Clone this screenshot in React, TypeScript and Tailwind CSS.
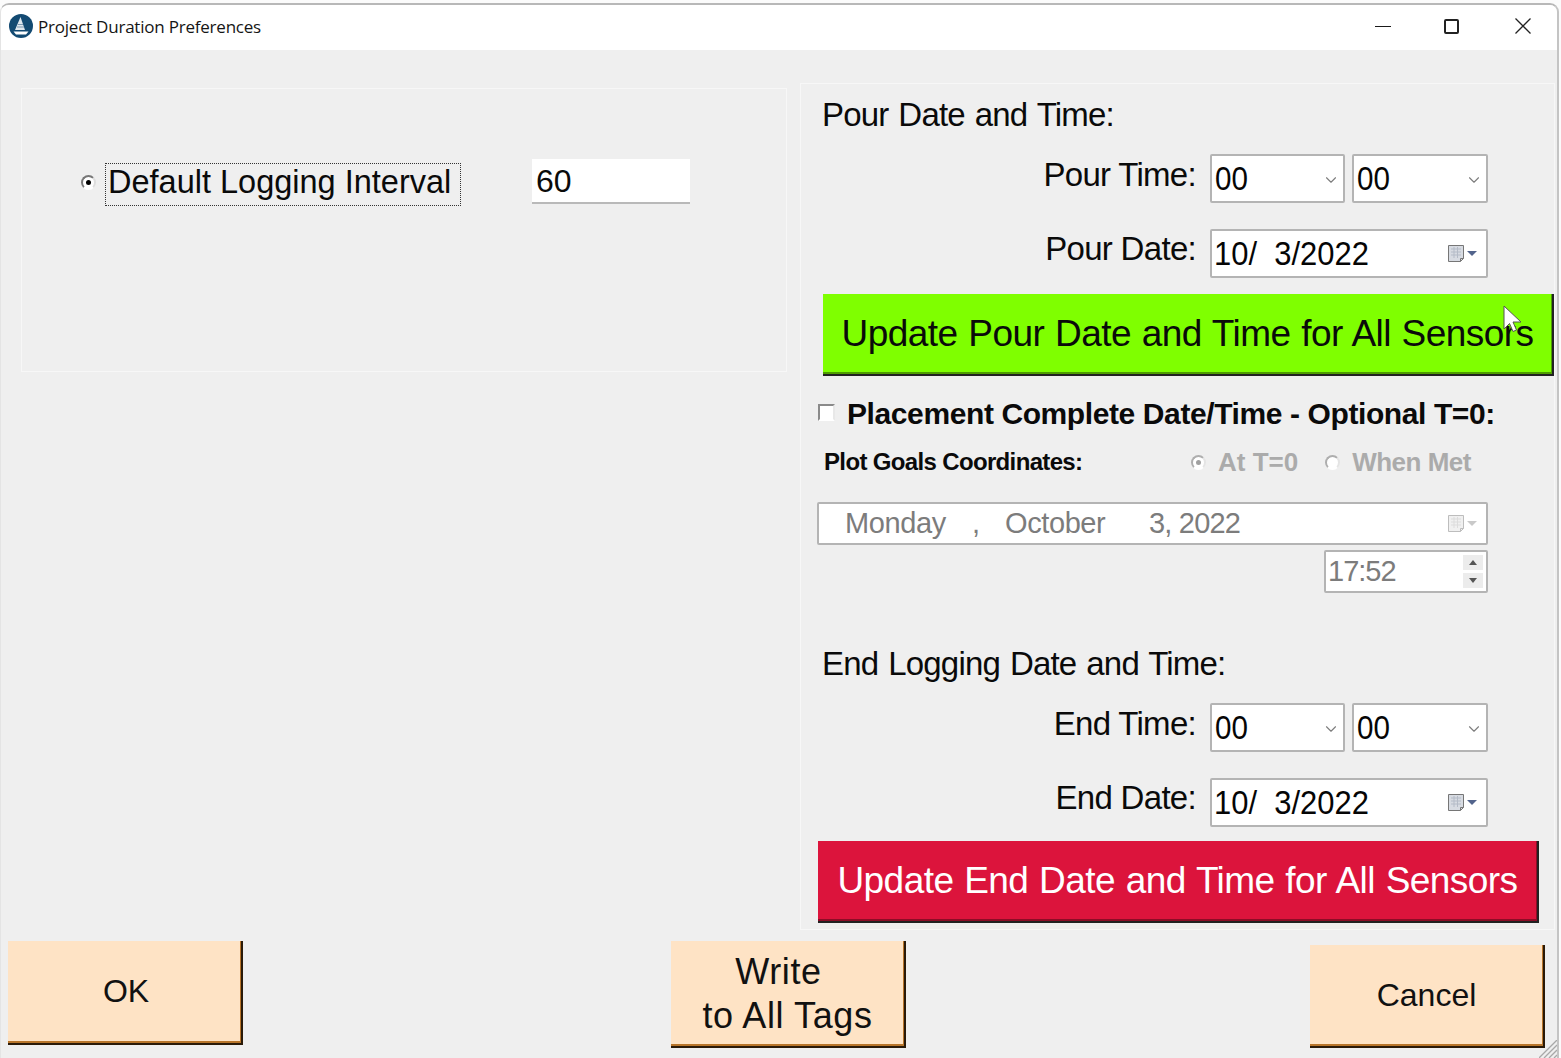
import { ChevronDown } from 'lucide-react'

const sans = "font-['Liberation_Sans',Arial,sans-serif]"

function CalendarIcon({ disabled }: { disabled?: boolean }) {
  const stroke = disabled ? '#bdbdbd' : '#767676'
  const fill = disabled ? '#f0f0f0' : '#d7dbe2'
  return (
    <svg width="32" height="20" viewBox="0 0 32 20" className="shrink-0">
      <path d="M1.5 1.5h15v13l-3 3h-12z" fill={fill} stroke={stroke} />
      <path d="M4 5h10M4 8h10M4 11h10M7 3v11M10.5 3v11" stroke={disabled ? '#dcdcdc' : '#b4bbc7'} />
      <path d="M13.5 17.5v-3h3" fill="none" stroke={stroke} />
      <path d="M20 7h10l-5 5z" fill={disabled ? '#c9c9c9' : '#52648c'} />
    </svg>
  )
}

function Combo({ wide }: { wide?: boolean }) {
  return (
    <div
      className={`flex h-[49px] items-center justify-between rounded-[2px] border-2 border-[#b4b4b4] bg-white pr-[3px] pl-[3px] text-[34px] text-[#050505] ${
        wide ? 'w-[136px]' : 'w-[135px]'
      }`}
    >
      <span className="origin-left scale-x-[0.87]">00</span>
      <ChevronDown size={18} strokeWidth={1.5} className="mt-0.5 text-[#7d7d7d]" />
    </div>
  )
}

function DateField({ value }: { value: string }) {
  return (
    <div className="flex h-[49px] w-[278px] items-center justify-between rounded-[2px] border-2 border-[#b4b4b4] bg-white pr-[7px] pl-[2px] text-[34px] text-[#050505]">
      <span className="origin-left scale-x-[0.91] whitespace-pre">{value}</span>
      <CalendarIcon />
    </div>
  )
}

function FormRow({
  label,
  last,
  className,
  raise,
}: {
  label: string
  last: React.ReactNode
  className?: string
  raise: string
}) {
  return (
    <div className={`flex items-center ${className ?? ''}`}>
      <span className={`w-[395px] text-right text-[33px] leading-none tracking-[-0.7px] ${raise}`}>{label}</span>
      <div className="ml-[14px] flex gap-[7px]">{last}</div>
    </div>
  )
}

function RadioDot({ checked, disabled }: { checked?: boolean; disabled?: boolean }) {
  return (
    <span
      className={`relative inline-block h-[15px] w-[15px] shrink-0 rounded-full border-2 bg-white ${
        disabled
          ? 'border-t-[#aeaeae] border-r-[#e4e4e4] border-b-white border-l-[#aeaeae]'
          : 'border-t-[#777] border-r-[#ddd] border-b-white border-l-[#777]'
      }`}
    >
      {checked && (
        <span
          className={`absolute top-[3px] left-[3px] h-[5px] w-[5px] rounded-full ${disabled ? 'bg-[#a0a0a0]' : 'bg-black'}`}
        />
      )}
    </span>
  )
}

function PeachButton({ children, className }: { children: React.ReactNode; className?: string }) {
  return (
    <button
      className={`flex w-[235px] shrink-0 flex-col items-center justify-center border-r-2 border-b-2 border-r-[#2a1a08] border-b-[#2a1a08] bg-[#fee3c5] text-[#111] shadow-[inset_-1px_-2px_0_#b8752a] ${className ?? ''}`}
    >
      {children}
    </button>
  )
}

export default function App() {
  return (
    <div className={`h-[1058px] w-[1561px] overflow-hidden bg-[#fbfbfb] pt-[3px] ${sans}`}>
      <div className="relative flex h-[1055px] w-[1559px] flex-col overflow-hidden rounded-t-[9px] border-t-2 border-r-2 border-l border-t-[#b8b8b8] border-r-[#c4c4c4] border-l-[#e4e4e4] bg-[#efefef] text-[#0a0a0a]">
        {/* Title bar */}
        <div className="flex h-[45px] shrink-0 items-center bg-white pl-[8px] font-['Open_Sans',sans-serif]">
          <svg width="24" height="24" viewBox="0 0 24 24" className="mb-1 shrink-0">
            <circle cx="12" cy="12" r="12" fill="#134a72" />
            <path d="M11.5 3 6 16h10z" fill="#dfe7ee" />
            <path d="M9 10.5h5M8 13h7" stroke="#7c98b0" strokeWidth="1" />
            <path d="M4.5 17.5h15l-2.5 3h-10z" fill="#ffffff" />
          </svg>
          <span className="mb-px ml-[5px] text-[17px] tracking-[-0.22px] text-[#151515]">Project Duration Preferences</span>
          <div className="ml-auto flex items-center pr-[26px] pb-[3px]">
            <span className="block h-px w-[16px] bg-[#1a1a1a]" />
            <span className="ml-[53px] block h-[15px] w-[15px] rounded-[2px] border-2 border-[#222]" />
            <svg width="16" height="16" viewBox="0 0 16 16" className="ml-[56px]">
              <path d="M.5.5l15 15M15.5.5l-15 15" stroke="#222" strokeWidth="1.3" />
            </svg>
          </div>
        </div>

        {/* Panels */}
        <div className="flex items-start pt-[33px] pl-[20px]">
          <div className="mt-[5px] h-[284px] w-[766px] shrink-0 border border-[#f7f7f7] pt-[74px] pl-[59px]">
            <div className="flex items-start">
              <div className="mt-[10px]">
                <RadioDot checked />
              </div>
              <span className="ml-[9px] flex h-[43px] w-[356px] items-center border border-dotted border-[#333] pb-[4px] pl-[2px] text-[32.5px] whitespace-nowrap">
                Default Logging Interval
              </span>
              <div className="mt-[-4px] ml-[71px] flex h-[45px] w-[158px] items-center border-b-2 border-b-[#b9b9b9] bg-white pl-[4px] text-[32px]">
                60
              </div>
            </div>
          </div>

          <div className="ml-[13px] h-[847px] w-[755px] shrink-0 border border-[#f7f7f7]">
            <div className="mt-[13px] ml-[21px] text-[33px] leading-[36px] tracking-[-0.8px] [word-spacing:1.5px]">
              Pour Date and Time:
            </div>
            <FormRow
              className="mt-[21px]"
              label="Pour Time:"
              raise="mb-[8px]"
              last={
                <>
                  <Combo />
                  <Combo wide />
                </>
              }
            />
            <FormRow className="mt-[26px]" label="Pour Date:" raise="mb-[11px]" last={<DateField value="10/  3/2022" />} />

            <button className="mt-[16px] ml-[22px] flex h-[82px] w-[731px] items-center justify-center border-r-2 border-b-2 border-r-[#222] border-b-[#222] bg-[#7fff00] text-[37px] tracking-[-0.55px] whitespace-nowrap text-[#0a0a0a] shadow-[inset_-1px_-2px_0_#4f9c00] [word-spacing:1px]">
              Update Pour Date and Time for All Sensors
            </button>

            <div className="mt-[22px] ml-[17px] flex h-[30px] items-center">
              <span className="mb-[2px] h-[17px] w-[17px] shrink-0 border-2 border-t-[#8a8a8a] border-r-[#e8e8e8] border-b-[#fff] border-l-[#8a8a8a] bg-white" />
              <span className="ml-[12px] text-[30px] font-bold tracking-[-0.4px] whitespace-nowrap">
                Placement Complete Date/Time - Optional T=0:
              </span>
            </div>

            <div className="mt-[19px] ml-[23px] flex h-[30px] items-center text-[24px] font-bold">
              <span className="w-[367px] tracking-[-0.65px] whitespace-nowrap">Plot Goals Coordinates:</span>
              <RadioDot checked disabled />
              <span className="ml-[12px] text-[26px] text-[#ababab]">At T=0</span>
              <span className="ml-[27px]">
                <RadioDot disabled />
              </span>
              <span className="ml-[12px] text-[26px] tracking-[-0.5px] text-[#ababab]">When Met</span>
            </div>

            <div className="mt-[25px] ml-[16px] flex h-[43px] w-[671px] items-center rounded-[2px] border-2 border-[#b4b4b4] bg-white pr-[7px] pl-[26px] text-[29px] tracking-[-0.4px] text-[#7c7c7c]">
              <span className="w-[127px]">Monday</span>
              <span className="w-[33px]">,</span>
              <span className="w-[144px]">October</span>
              <span className="tracking-[-0.8px]">3, 2022</span>
              <span className="ml-auto">
                <CalendarIcon disabled />
              </span>
            </div>

            <div className="mt-[5px] ml-[523px] flex h-[43px] w-[164px] items-center justify-between rounded-[2px] border-2 border-[#b4b4b4] bg-white pr-[3px] pl-[2px] text-[29px] tracking-[-1px] text-[#7c7c7c]">
              <span>17:52</span>
              <div className="flex flex-col gap-[3px]">
                <span className="flex h-[15px] w-[20px] items-center justify-center bg-[#ececec]">
                  <svg width="8" height="5" viewBox="0 0 8 5">
                    <path d="M4 0l4 5H0z" fill="#555" />
                  </svg>
                </span>
                <span className="flex h-[15px] w-[20px] items-center justify-center bg-[#ececec]">
                  <svg width="8" height="5" viewBox="0 0 8 5">
                    <path d="M0 0h8L4 5z" fill="#555" />
                  </svg>
                </span>
              </div>
            </div>

            <div className="mt-[53px] ml-[21px] text-[33px] leading-[36px] tracking-[-0.8px] [word-spacing:1.5px]">
              End Logging Date and Time:
            </div>
            <FormRow
              className="mt-[21px]"
              label="End Time:"
              raise="mb-[8px]"
              last={
                <>
                  <Combo />
                  <Combo wide />
                </>
              }
            />
            <FormRow className="mt-[26px]" label="End Date:" raise="mb-[11px]" last={<DateField value="10/  3/2022" />} />

            <button className="mt-[14px] ml-[17px] flex h-[82px] w-[721px] items-center justify-center border-r-2 border-b-2 border-r-[#222] border-b-[#222] bg-[#dc143c] text-[37px] tracking-[-0.55px] whitespace-nowrap text-white shadow-[inset_-1px_-2px_0_#8c0d26] [word-spacing:1px]">
              Update End Date and Time for All Sensors
            </button>
          </div>
        </div>

        {/* Bottom buttons */}
        <div className="mt-[11px] flex items-start pl-[7px]">
          <PeachButton className="h-[104px] pb-[2px] pl-[3px] text-[32px]">OK</PeachButton>
          <PeachButton className="ml-[428px] h-[107px] text-[36px] leading-[44px] tracking-[0.6px]">
            <span className="mr-[18px]">Write</span>
            <span>to All Tags</span>
          </PeachButton>
          <PeachButton className="mt-[4px] ml-[404px] h-[103px] pb-[2px] text-[32px]">Cancel</PeachButton>
        </div>

        {/* Size grip */}
        <svg width="18" height="18" viewBox="0 0 18 18" className="absolute right-0 bottom-0">
          <path d="M0 18 18 0M5 18 18 5M10 18l8-8M15 18l3-3" stroke="#a8a8a8" strokeWidth="1.3" />
        </svg>

        {/* Mouse pointer */}
        <svg width="20" height="30" viewBox="0 0 20 30" className="absolute top-[300px] left-[1502px]">
          <path d="M1 1v23l5.5-5.5 3.5 8 3.5-1.5-3.5-8h8z" fill="#fff" stroke="#555" strokeWidth="1" />
        </svg>
      </div>
    </div>
  )
}
